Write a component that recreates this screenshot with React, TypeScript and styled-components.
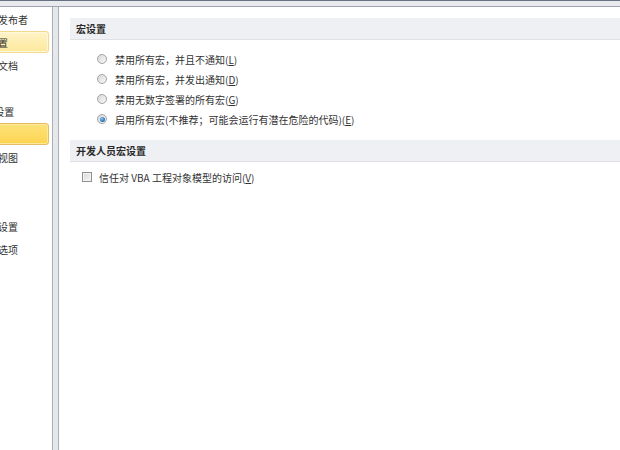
import React from 'react'
import styled, { createGlobalStyle, css } from 'styled-components'

const GlobalStyle = createGlobalStyle`
  html, body {
    margin: 0;
    padding: 0;
    background: #fff;
  }
  body {
    font-family: "Noto Sans CJK SC", "Microsoft YaHei", sans-serif;
    font-size: 10px;
    color: #2e2e2e;
  }
`

const Window = styled.div`
  width: 620px;
  height: 450px;
  display: flex;
  flex-direction: column;
  overflow: hidden;
  background: #fff;
`

const TopStrip = styled.div`
  height: 5px;
  flex: none;
  background: #e8eaed;
  border-top: 1px solid #66727f;
  border-bottom: 1px solid #9ca4ae;
`

const Body = styled.div`
  flex: 1;
  display: flex;
  min-height: 0;
`

const Nav = styled.div`
  width: 52px;
  flex: none;
  border-right: 1px solid #a9afb7;
  overflow: hidden;
  background: #fff;
`

const NavItem = styled.div<{ $state?: 'hover' | 'selected' }>`
  box-sizing: border-box;
  height: 22px;
  margin: 1px 3px 0 -60px;
  padding-left: 17px;
  border: 1px solid transparent;
  border-radius: 3px;
  display: flex;
  align-items: center;
  white-space: nowrap;
  font-size: 10px;
  color: #333;
  ${(p) =>
    p.$state === 'hover' &&
    css`
      background: linear-gradient(#fff4c8, #fde89a);
      border-color: #f2d98b;
      box-shadow: inset 0 0 0 1px #fff8dc;
    `}
  ${(p) =>
    p.$state === 'selected' &&
    css`
      background: linear-gradient(#fde27a, #fdd450);
      border-color: #e3bd63;
      box-shadow: inset 0 0 0 1px #fee89a;
    `}
`

const Splitter = styled.div`
  width: 5px;
  flex: none;
  background: #e6e8ec;
`

const Content = styled.div`
  flex: 1;
  border-left: 1px solid #a9afb7;
  padding: 11px 0 0 11px;
  background: #fff;
`

const SectionHeader = styled.div`
  height: 21px;
  display: flex;
  align-items: center;
  padding-left: 6px;
  background: #eff0f3;
  border-bottom: 1px solid #dfe1e6;
  font-weight: bold;
  font-size: 10px;
  color: #2a2a2a;
`

const OptionList = styled.div<{ $top: number; $bottom: number; $indent: number }>`
  display: flex;
  flex-direction: column;
  margin: ${(p) => p.$top}px 0 ${(p) => p.$bottom}px 0;
  padding-left: ${(p) => p.$indent}px;
`

const OptionRow = styled.label<{ $gap: number }>`
  height: 20px;
  display: flex;
  align-items: center;
  gap: ${(p) => p.$gap}px;
  font-size: 10px;
  color: #333;
  white-space: nowrap;
`

const Radio = styled.span<{ $checked?: boolean }>`
  width: 10px;
  height: 10px;
  box-sizing: border-box;
  border-radius: 50%;
  border: 1px solid #a3a3a3;
  background: linear-gradient(135deg, #d8d8d8, #f7f7f7);
  display: flex;
  align-items: center;
  justify-content: center;
  flex: none;
  &::after {
    content: '';
    display: ${(p) => (p.$checked ? 'block' : 'none')};
    width: 5px;
    height: 5px;
    border-radius: 50%;
    background: radial-gradient(circle at 40% 35%, #8cc6f5, #1f66b8 70%);
  }
`

const Checkbox = styled.span`
  width: 10px;
  height: 10px;
  box-sizing: border-box;
  border: 1px solid #8e8f8f;
  background: linear-gradient(135deg, #d9d9d9, #f6f6f6);
  box-shadow: inset 0 0 0 1px #f4f4f4;
  flex: none;
`

const Key = styled.u`
  text-underline-offset: 1px;
`

const navItems: { label: string; state?: 'hover' | 'selected' }[] = [
  { label: '受信任的发布者' },
  { label: '受信任位置', state: 'hover' },
  { label: '受信任的文档' },
  { label: '加载项' },
  { label: 'ActiveX 设置' },
  { label: '宏设置', state: 'selected' },
  { label: '受保护的视图' },
  { label: '消息栏' },
  { label: '外部内容' },
  { label: '文件阻止设置' },
  { label: '个人信息选项' },
]

const macroOptions = [
  { text: '禁用所有宏，并且不通知', key: 'L' },
  { text: '禁用所有宏，并发出通知', key: 'D' },
  { text: '禁用无数字签署的所有宏', key: 'G' },
  { text: '启用所有宏(不推荐；可能会运行有潜在危险的代码)', key: 'E', checked: true },
]

export default function App() {
  return (
    <>
      <GlobalStyle />
      <Window>
        <TopStrip />
        <Body>
          <Nav>
            {navItems.map((item) => (
              <NavItem key={item.label} $state={item.state}>
                {item.label}
              </NavItem>
            ))}
          </Nav>
          <Splitter />
          <Content>
            <SectionHeader>宏设置</SectionHeader>
            <OptionList $top={9} $bottom={11} $indent={27}>
              {macroOptions.map((o) => (
                <OptionRow key={o.key} $gap={8}>
                  <Radio $checked={o.checked} />
                  <span>
                    {o.text}(<Key>{o.key}</Key>)
                  </span>
                </OptionRow>
              ))}
            </OptionList>
            <SectionHeader>开发人员宏设置</SectionHeader>
            <OptionList $top={5} $bottom={0} $indent={12}>
              <OptionRow $gap={7}>
                <Checkbox />
                <span>
                  信任对 VBA 工程对象模型的访问(<Key>V</Key>)
                </span>
              </OptionRow>
            </OptionList>
          </Content>
        </Body>
      </Window>
    </>
  )
}
